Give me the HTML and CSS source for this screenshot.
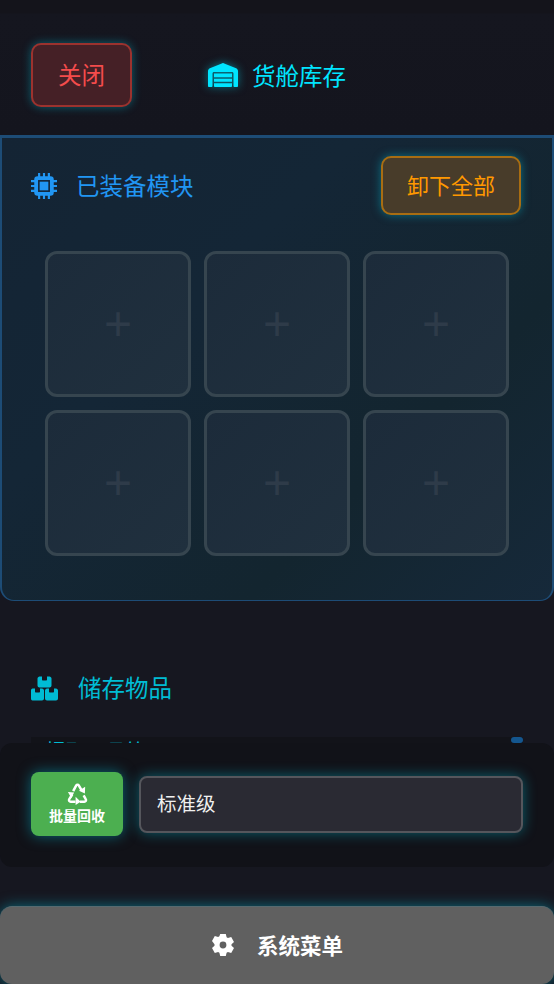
FILE: index.html
```html
<!DOCTYPE html>
<html lang="zh">
<head>
<meta charset="utf-8">
<title>货舱库存</title>
<link rel="stylesheet" href="styles.css">
</head>
<body>
<div class="page">
  <header class="topbar">
    <button class="close-btn">关闭</button>
    <div class="title">
      <svg class="title-icon" viewBox="0 0 640 512"><path fill="currentColor" d="M0 488V171c0-26 16-50 40-60L308 4c8-3 16-3 24 0l268 107c24 10 40 34 40 60v317c0 13-11 24-24 24h-48c-13 0-24-11-24-24V224c0-18-14-32-32-32H128c-18 0-32 14-32 32v264c0 13-11 24-24 24H24c-13 0-24-11-24-24zm488 24H152c-13 0-24-11-24-24v-56h384v56c0 13-11 24-24 24zM128 400v-64h384v64H128zm0-96v-80h384v80H128z"/></svg>
      <span>货舱库存</span>
    </div>
  </header>

  <section class="panel">
    <div class="panel-head">
      <div class="section-label blue">
        <svg class="label-icon" viewBox="0 0 24 24" fill="none"><path stroke="currentColor" stroke-width="2" d="M7.500 0v24M12 0v24M16.500 0v24M0 7.500h24M0 12h24M0 16.500h24"/><rect x="3" y="3" width="18" height="18" rx="3" fill="currentColor"/><rect x="6.500" y="6.500" width="11" height="11" fill="#13263a"/><rect x="8" y="8" width="8" height="8" fill="currentColor"/></svg>
        <span>已装备模块</span>
      </div>
      <button class="unload-btn">卸下全部</button>
    </div>
    <div class="slots">
      <div class="slot">+</div>
      <div class="slot">+</div>
      <div class="slot">+</div>
      <div class="slot">+</div>
      <div class="slot">+</div>
      <div class="slot">+</div>
    </div>
  </section>

  <section class="storage">
    <div class="section-label cyan">
      <svg class="label-icon wide" viewBox="0 0 27 24"><path fill="currentColor" d="M8.500 0h2.500v3c0 .6.400 1 1 1h3c.6 0 1-.4 1-1V0h2.500c1 0 2 1 2 2v7c0 1-1 2-2 2h-10c-1 0-2-1-2-2V2c0-1 1-2 2-2zM1.500 12H4v3c0 .6.400 1 1 1h3c.6 0 1-.4 1-1v-3h2c1 0 2 1 2 2v8c0 1-1 2-2 2H1.500c-.9 0-1.500-1-1.500-2v-8c0-1 .6-2 1.500-2zM16 12h2v3c0 .6.400 1 1 1h3c.6 0 1-.4 1-1v-3h2c1 0 2 1 2 2v8c0 1-1 2-2 2H16c-1 0-2-1-2-2v-8c0-1 1-2 2-2z"/></svg>
      <span>储存物品</span>
    </div>
    <div class="list">
      <div class="list-text">提取工具箱</div>
      <div class="scroll-thumb"></div>
    </div>
  </section>

  <section class="dock">
    <button class="recycle-btn">
      <svg class="recycle-icon" viewBox="0 0 24 24" fill="none" stroke="currentColor" stroke-width="2.600"><path d="M7.500 9.500 10.700 3.500c.6-1 2-1 2.600 0l2.900 5"/><path fill="currentColor" stroke="none" d="M20 5 19.700 12l-6.200-3z"/><path d="M6.500 13 3.400 17.800c-.8 1.300.1 2.700 1.500 2.700h5"/><path fill="currentColor" stroke="none" d="M2 10.500l6.500.5-3 5.800zM10 15.500l5.300 5L10 24z"/><path d="M14.500 20.500h4.600c1.400 0 2.300-1.400 1.500-2.700l-2.200-3.800"/></svg>
      <span>批量回收</span>
    </button>
    <div class="tier-select">标准级</div>
  </section>

  <button class="system-btn">
    <svg class="gear" viewBox="0 0 24 24"><path fill="currentColor" fill-rule="evenodd" d="M9.200 1h5.600l.8 3.300 1.300.8 3.300-1 2.800 5-2.500 2.200v1.400l2.500 2.200-2.800 5-3.300-1-1.300.8-.8 3.300H9.200l-.8-3.300-1.300-.8-3.300 1-2.800-5 2.500-2.200v-1.400L1 8.100l2.800-5 3.300 1 1.300-.8zM12 8.600a3.400 3.400 0 1 0 0 6.800 3.400 3.400 0 0 0 0-6.800z"/></svg>
    <span>系统菜单</span>
  </button>
</div>
</body>
</html>
```

FILE: styles.css
```css
* { box-sizing: border-box; }
html, body { margin: 0; padding: 0; }
body {
  width: 554px;
  height: 984px;
  overflow: hidden;
  background: #161720;
  font-family: "Noto Sans CJK SC", "Noto Sans", sans-serif;
}
button { font-family: inherit; cursor: pointer; padding: 0; }
.page { width: 554px; height: 984px; display: flex; flex-direction: column; overflow: hidden; }

.topbar {
  height: 135px;
  flex: none;
  display: flex;
  align-items: center;
  gap: 76px;
  padding: 15px 0 0 31px;
  background: linear-gradient(#14141b 0, #14141b 13px, #15161f 14px, #14151e 100%);
}
.close-btn {
  width: 101px;
  height: 64px;
  border: 2px solid rgba(244, 67, 54, .5);
  border-radius: 10px;
  background: #452026;
  color: #f44c4c;
  font-size: 23.500px;
  padding-bottom: 3px;
  box-shadow: 0 0 10px rgba(0, 188, 212, .45);
}
.title { display: flex; align-items: center; gap: 14px; color: #00e5ff; font-size: 23.500px; line-height: 32px; }
.title-icon { width: 30px; height: 24px; filter: drop-shadow(0 0 4px rgba(0, 229, 255, .5)); }

.panel {
  height: 466px;
  flex: none;
  border: 1px solid #1d4c76;
  border-top: 3px solid #1d4c76;
  border-left-width: 2px;
  border-right-width: 2px;
  border-radius: 0 0 14px 14px;
  background: linear-gradient(135deg, #142434 0%, #142636 35%, #13252f 70%, #16293a 100%);
  padding: 18px 29px 0 29px;
}
.panel-head { display: flex; justify-content: space-between; align-items: center; height: 59px; padding-right: 2px; }
.section-label { display: flex; align-items: center; gap: 19px; font-size: 23.500px; line-height: 32px; }
.section-label > span { position: relative; top: -1px; }
.section-label.blue { color: #2196f3; }
.section-label.cyan { color: #00bcd4; gap: 20px; }
.label-icon { width: 26px; height: 26px; flex: none; }
.label-icon.wide { width: 27px; height: 25px; }
.unload-btn {
  width: 140px;
  height: 59px;
  border: 2px solid #a86d12;
  border-radius: 10px;
  background: #483c2a;
  color: #ff9800;
  font-size: 22px;
  padding-bottom: 3px;
  box-shadow: 0 0 10px rgba(0, 188, 212, .5);
}
.slots {
  margin: 36px 0 0 14px;
  display: grid;
  grid-template-columns: repeat(3, 146px);
  grid-auto-rows: 146px;
  gap: 13px;
}
.slot {
  border: 3px solid #36454f;
  border-radius: 12px;
  background: linear-gradient(135deg, #1c2b3a, #20303e);
  color: #2e3b49;
  font-size: 48px;
  line-height: 1;
  display: flex;
  align-items: center;
  justify-content: center;
  font-family: "Liberation Sans", sans-serif;
}

.storage { height: 142px; flex: none; padding: 71px 31px 0; }
.storage .section-label { height: 32px; }
.list {
  margin-top: 33px;
  height: 6px;
  background: #121319;
  position: relative;
  overflow: hidden;
  padding-left: 15px;
  color: #00bcd4;
  font-size: 20px;
  line-height: 28px;
}
.scroll-thumb {
  position: absolute;
  right: 0;
  top: 0;
  width: 12px;
  height: 6px;
  border-radius: 3px;
  background: #14568e;
}

.dock {
  height: 124px;
  flex: none;
  border-radius: 12px;
  background: #111218;
  display: flex;
  align-items: center;
  gap: 16px;
  padding: 0 31px 2px;
}
.recycle-btn {
  width: 92px;
  height: 64px;
  flex: none;
  border: 0;
  border-radius: 8px;
  background: #4caf50;
  color: #fff;
  font-size: 14px;
  font-weight: 700;
  line-height: 18px;
  display: flex;
  flex-direction: column;
  align-items: center;
  justify-content: center;
  gap: 1px;
  padding-bottom: 3px;
  box-shadow: 0 0 14px rgba(0, 188, 212, .5);
}
.recycle-icon { width: 23px; height: 23px; }
.tier-select {
  flex: 1;
  height: 57px;
  border: 2px solid #55565c;
  border-radius: 8px;
  background: #2a2a33;
  color: #f0f0f0;
  font-size: 19.500px;
  display: flex;
  align-items: center;
  padding-left: 16px;
  padding-bottom: 4px;
  box-shadow: 0 0 14px rgba(0, 188, 212, .45);
}

.system-btn {
  margin-top: 39px;
  flex: none;
  height: 78px;
  width: 554px;
  border: 0;
  border-top: 1px solid #566a70;
  border-radius: 12px;
  background: #606060;
  color: #fff;
  font-size: 21.500px;
  font-weight: 700;
  display: flex;
  align-items: center;
  justify-content: center;
  gap: 22px;
  padding-bottom: 1px;
  box-shadow: 0 0 14px rgba(0, 188, 212, .5);
}
.system-btn span { position: relative; top: -1px; }
.gear { width: 24px; height: 24px; }
```
